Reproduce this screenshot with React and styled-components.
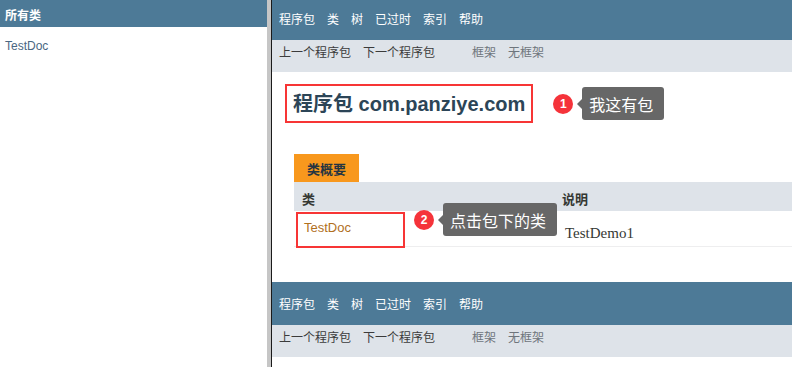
import React from "react";
import styled, { createGlobalStyle } from "styled-components";

const GlobalStyle = createGlobalStyle`
  html, body {
    margin: 0;
    padding: 0;
    background: #fff;
  }
  body {
    font-family: "Liberation Sans", "Noto Sans CJK SC", sans-serif;
    font-size: 12px;
    color: #353833;
    overflow: hidden;
  }
`;

const Page = styled.div`
  display: flex;
  width: 792px;
  height: 367px;
  overflow: hidden;
`;

const LeftFrame = styled.aside`
  width: 267px;
  flex: none;
  background: #fff;
`;

const FrameTitle = styled.div`
  height: 27px;
  padding: 2px 0 0 5px;
  box-sizing: border-box;
  display: flex;
  align-items: center;
  background: #4d7a97;
  color: #fff;
  font-weight: bold;
  font-size: 12px;
`;

const ClassList = styled.ul`
  list-style: none;
  margin: 0;
  padding: 12px 0 0 5px;
  li {
    line-height: 14px;
    color: #4a6782;
  }
`;

const Divider = styled.div`
  width: 4px;
  flex: none;
  background: #c6c6c6;
  border-right: 1px solid #1b1b1b;
`;

const RightFrame = styled.main`
  flex: 1;
  min-width: 0;
  display: flex;
  flex-direction: column;
  overflow: hidden;
`;

const NavBar = styled.nav`
  height: ${(p) => p.$height}px;
  padding: ${(p) => p.$shift}px 0 0 7px;
  box-sizing: border-box;
  flex: none;
  display: flex;
  align-items: center;
  gap: 12px;
  background: #4d7a97;
  color: #fff;
  font-size: 12px;
  line-height: 16px;
  margin-top: ${(p) => p.$top || 0}px;
`;

const SubNav = styled.div`
  height: 32px;
  padding: 0 0 6px 7px;
  box-sizing: border-box;
  flex: none;
  display: flex;
  align-items: center;
  gap: 37px;
  background: #dee3e9;
  font-size: 12px;
  line-height: 16px;
`;

const NavGroup = styled.div`
  display: flex;
  gap: 12px;
`;

const NavItem = styled.span`
  color: ${(p) => (p.$link ? "#6e757c" : "#3b3b3b")};
`;

const TitleRow = styled.div`
  display: flex;
  align-items: center;
  margin: 12px 0 0 13px;
`;

const Marked = styled.div`
  border: 2px solid #f73535;
  box-sizing: border-box;
  height: ${(p) => p.$h}px;
  width: ${(p) => (p.$w ? `${p.$w}px` : "auto")};
  padding: 0 ${(p) => p.$pad}px ${(p) => p.$lift || 0}px;
  margin: ${(p) => p.$m || 0};
  display: flex;
  align-items: center;
`;

const Title = styled.h1`
  margin: 0;
  font-size: 20px;
  line-height: 24px;
  font-weight: bold;
  color: #2c4557;
  white-space: nowrap;
`;

const Callout = styled.div`
  display: flex;
  align-items: center;
  gap: 9px;
  margin-left: ${(p) => p.$gap || 0}px;
  ${(p) => p.$float && `position: absolute; left: ${p.$x}px; top: ${p.$y}px; z-index: 2;`}
`;

const Badge = styled.span`
  width: 20px;
  height: 20px;
  border-radius: 50%;
  background: #f5333a;
  color: #fff;
  font-size: 12px;
  font-weight: bold;
  display: flex;
  align-items: center;
  justify-content: center;
  flex: none;
`;

const Tip = styled.span`
  position: relative;
  height: 33px;
  padding: 0 11px 0 7px;
  display: flex;
  align-items: center;
  background: #676767;
  color: #fff;
  font-size: 16px;
  border-radius: 3px;
  white-space: nowrap;
  &::before {
    content: "";
    position: absolute;
    left: -5px;
    top: 50%;
    margin-top: -5px;
    border-style: solid;
    border-width: 5px 5px 5px 0;
    border-color: transparent #676767 transparent transparent;
  }
`;

const Summary = styled.section`
  margin: 31px 0 0 22px;
`;

const Tab = styled.div`
  display: inline-flex;
  align-items: center;
  height: 28px;
  padding: 0 13px;
  background: #f8981d;
  color: #253441;
  font-size: 13px;
  font-weight: bold;
`;

const Table = styled.div`
  display: grid;
  grid-template-columns: 260px 1fr;
`;

const HeadCell = styled.div`
  height: 29px;
  padding: 10px 0 0 8px;
  box-sizing: border-box;
  background: #dee3e9;
  font-size: 13px;
  line-height: 16px;
  font-weight: bold;
  color: #353833;
`;

const Cell = styled.div`
  position: relative;
  height: 36px;
  box-sizing: border-box;
  border-bottom: 1px solid #eeeeef;
  padding: ${(p) => p.$pad || 0};
`;

const ClassLink = styled.span`
  color: #b1701e;
  font-size: 13px;
  line-height: 16px;
`;

const Desc = styled.span`
  font-family: "Liberation Serif", "Noto Serif CJK SC", serif;
  font-size: 15px;
  line-height: 18px;
  color: #353833;
`;

const topItems = ["程序包", "类", "树", "已过时", "索引", "帮助"];

function Navigation({ height, shift, top }) {
  return (
    <>
      <NavBar $height={height} $shift={shift} $top={top}>
        {topItems.map((t) => (
          <span key={t}>{t}</span>
        ))}
      </NavBar>
      <SubNav>
        <NavGroup>
          <NavItem>上一个程序包</NavItem>
          <NavItem>下一个程序包</NavItem>
        </NavGroup>
        <NavGroup>
          <NavItem $link>框架</NavItem>
          <NavItem $link>无框架</NavItem>
        </NavGroup>
      </SubNav>
    </>
  );
}

export default function App() {
  return (
    <Page>
      <GlobalStyle />
      <LeftFrame>
        <FrameTitle>所有类</FrameTitle>
        <ClassList>
          <li>TestDoc</li>
        </ClassList>
      </LeftFrame>
      <Divider />
      <RightFrame>
        <Navigation height={40} shift={0} />
        <TitleRow>
          <Marked $h={39} $pad={6}>
            <Title>程序包 com.panziye.com</Title>
          </Marked>
          <Callout $gap={20}>
            <Badge>1</Badge>
            <Tip>我这有包</Tip>
          </Callout>
        </TitleRow>
        <Summary>
          <Tab>类概要</Tab>
          <Table>
            <HeadCell>类</HeadCell>
            <HeadCell>说明</HeadCell>
            <Cell>
              <Marked $h={36} $w={109} $pad={6} $lift={4} $m="1px 0 0 2px">
                <ClassLink>TestDoc</ClassLink>
              </Marked>
              <Callout $float $x={120} $y={-8}>
                <Badge>2</Badge>
                <Tip>点击包下的类</Tip>
              </Callout>
            </Cell>
            <Cell $pad="13px 0 0 11px">
              <Desc>TestDemo1</Desc>
            </Cell>
          </Table>
        </Summary>
        <Navigation height={43} shift={3} top={35} />
      </RightFrame>
    </Page>
  );
}
